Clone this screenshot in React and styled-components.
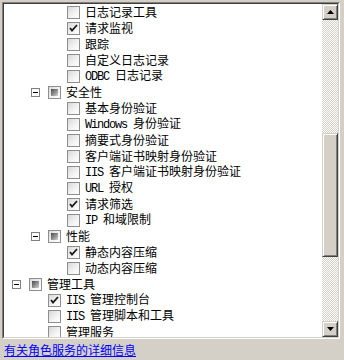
import React from "react";
import styled, { createGlobalStyle } from "styled-components";

const GlobalStyle = createGlobalStyle`
  html, body {
    margin: 0;
    padding: 0;
    background: #d4d0c8;
  }
`;

const Page = styled.div`
  width: 344px;
  height: 360px;
  background: #d4d0c8;
  padding: 2px 0 0 2px;
  box-sizing: border-box;
  display: flex;
  flex-direction: column;
  font-family: "Noto Sans CJK SC", sans-serif;
  font-size: 12px;
  overflow: hidden;
`;

const TreeBox = styled.div`
  width: 338px;
  height: 337px;
  box-sizing: border-box;
  border-style: solid;
  border-width: 1px;
  border-color: #808080 #ffffff #ffffff #808080;
  display: flex;
  flex-shrink: 0;
`;

const TreeInner = styled.div`
  flex: 1;
  display: flex;
  border-style: solid;
  border-width: 1px;
  border-color: #404040 #d4d0c8 #d4d0c8 #404040;
  background: #fff;
  overflow: hidden;
`;

const TreeList = styled.div`
  flex: 1;
  display: flex;
  flex-direction: column;
  overflow: hidden;
`;

const Row = styled.div`
  height: 16px;
  flex-shrink: 0;
  display: flex;
  align-items: center;
  padding-left: ${(p) => 8 + p.level * 19}px;
  color: #000;
  white-space: nowrap;
`;

const ExpanderSlot = styled.div`
  width: 17px;
  height: 16px;
  display: flex;
  align-items: center;
  flex-shrink: 0;
`;

const Expander = styled.div`
  width: 9px;
  height: 9px;
  box-sizing: border-box;
  border: 1px solid #808080;
  background: #fff;
  display: flex;
  align-items: center;
  justify-content: center;
  &::after {
    content: "";
    width: 5px;
    height: 1px;
    background: #000;
  }
`;

const Box = styled.div`
  width: 13px;
  height: 13px;
  box-sizing: border-box;
  border: 1px solid #8f8f8f;
  background: linear-gradient(135deg, #d8d8d8 0%, #f2f2f2 55%, #ffffff 100%);
  display: flex;
  align-items: center;
  justify-content: center;
  flex-shrink: 0;
  margin-right: 5px;
`;

const Partial = styled.div`
  width: 7px;
  height: 7px;
  background: linear-gradient(135deg, #4a4a4a 0%, #9a9a9a 60%, #d6d6d6 100%);
`;

const Label = styled.span`
  line-height: 16px;
`;

const Latin = styled.span`
  font-family: "Liberation Mono", monospace;
  letter-spacing: -1.2px;
  line-height: 16px;
`;

const ScrollBar = styled.div`
  width: 16px;
  display: flex;
  flex-direction: column;
  flex-shrink: 0;
  background: repeating-conic-gradient(#d4d0c8 0 25%, #ffffff 0 50%) 0 0 / 2px 2px;
`;

const ArrowButton = styled.div`
  width: 16px;
  height: 16px;
  box-sizing: border-box;
  background: #d4d0c8;
  border-style: solid;
  border-width: 1px;
  border-color: #d4d0c8 #404040 #404040 #d4d0c8;
  box-shadow: inset 1px 1px 0 #ffffff, inset -1px -1px 0 #808080;
  display: flex;
  align-items: center;
  justify-content: center;
  flex-shrink: 0;
`;

const Track = styled.div`
  flex: 1;
  display: flex;
  flex-direction: column;
  padding-top: ${(p) => p.offset}px;
`;

const Thumb = styled.div`
  height: ${(p) => p.size}px;
  box-sizing: border-box;
  background: #d4d0c8;
  border-style: solid;
  border-width: 1px;
  border-color: #d4d0c8 #404040 #404040 #d4d0c8;
  box-shadow: inset 1px 1px 0 #ffffff, inset -1px -1px 0 #808080;
`;

const Footer = styled.div`
  padding: 2px 0 0 2px;
`;

const Link = styled.a`
  color: #0000ff;
  text-decoration: underline;
  font-size: 12px;
  line-height: 16px;
  cursor: pointer;
`;

const Check = () => (
  <svg width="9" height="9" viewBox="0 0 9 9">
    <path d="M1 4 L3 6.5 L8 1" fill="none" stroke="#1a1a1a" strokeWidth="1.8" />
  </svg>
);

const Arrow = ({ down }) => (
  <svg width="7" height="4" viewBox="0 0 7 4">
    <path d={down ? "M0 0 H7 L3.5 4 Z" : "M0 4 H7 L3.5 0 Z"} fill="#000" />
  </svg>
);

const rows = [
  { level: 2, text: "日志记录工具" },
  { level: 2, text: "请求监视", state: "on" },
  { level: 2, text: "跟踪" },
  { level: 2, text: "自定义日志记录" },
  { level: 2, latin: "ODBC", text: "日志记录" },
  { level: 1, text: "安全性", state: "part", group: true },
  { level: 2, text: "基本身份验证" },
  { level: 2, latin: "Windows", text: "身份验证" },
  { level: 2, text: "摘要式身份验证" },
  { level: 2, text: "客户端证书映射身份验证" },
  { level: 2, latin: "IIS", text: "客户端证书映射身份验证" },
  { level: 2, latin: "URL", text: "授权" },
  { level: 2, text: "请求筛选", state: "on" },
  { level: 2, latin: "IP", text: "和域限制" },
  { level: 1, text: "性能", state: "part", group: true },
  { level: 2, text: "静态内容压缩", state: "on" },
  { level: 2, text: "动态内容压缩" },
  { level: 0, text: "管理工具", state: "part", group: true },
  { level: 1, latin: "IIS", text: "管理控制台", state: "on" },
  { level: 1, latin: "IIS", text: "管理脚本和工具" },
  { level: 1, text: "管理服务" },
];

export default function App() {
  return (
    <Page>
      <GlobalStyle />
      <TreeBox>
        <TreeInner>
          <TreeList>
            {rows.map((r, i) => (
              <Row key={i} level={r.level}>
                <ExpanderSlot>{r.group && <Expander />}</ExpanderSlot>
                <Box>
                  {r.state === "on" && <Check />}
                  {r.state === "part" && <Partial />}
                </Box>
                <Label>
                  {r.latin && <Latin>{r.latin} </Latin>}
                  {r.text}
                </Label>
              </Row>
            ))}
          </TreeList>
          <ScrollBar>
            <ArrowButton>
              <Arrow />
            </ArrowButton>
            <Track offset={113}>
              <Thumb size={124} />
            </Track>
            <ArrowButton>
              <Arrow down />
            </ArrowButton>
          </ScrollBar>
        </TreeInner>
      </TreeBox>
      <Footer>
        <Link>有关角色服务的详细信息</Link>
      </Footer>
    </Page>
  );
}
